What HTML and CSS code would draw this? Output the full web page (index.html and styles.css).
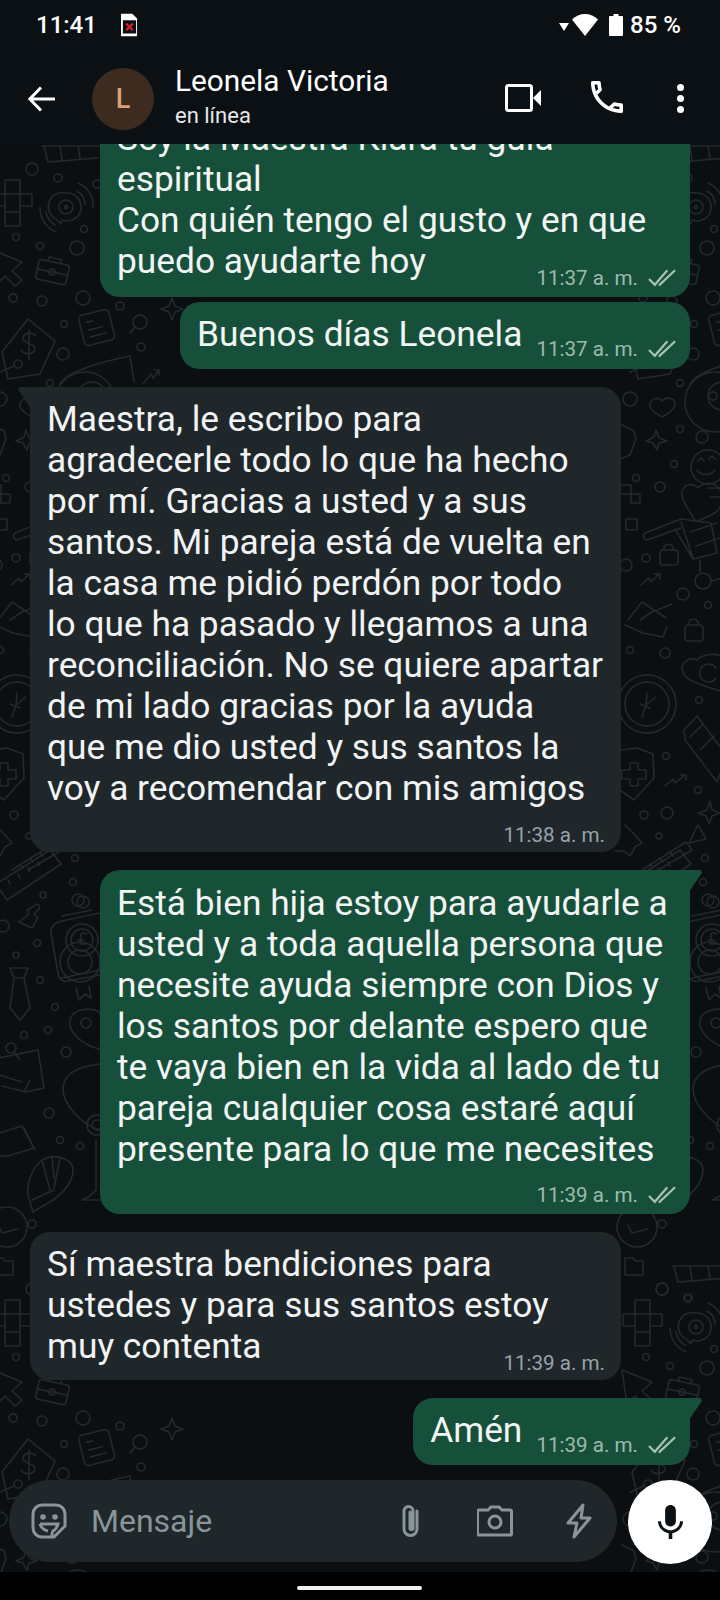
FILE: index.html
```html
<!DOCTYPE html>
<html lang="es">
<head>
    <meta charset="UTF-8">
    <meta name="viewport" content="width=device-width, initial-scale=1.0">
    <title>Leonela Victoria</title>
    <link rel="stylesheet" href="styles.css">
</head>
<body>
<div class="screen">
    <div class="statusbar">
        <span class="clock">11:41</span>
        <svg class="sim" viewBox="0 0 18 24"><path d="M1 0h11l5 5v18a1 1 0 0 1-1 1H1a1 1 0 0 1-1-1V1a1 1 0 0 1 1-1z" fill="#fff"/><rect x="2" y="7" width="14" height="14" fill="#0b1014"/><path d="M5.500 10.500l7 7M12.500 10.500l-7 7" stroke="#d3202b" stroke-width="2.400"/></svg>
        <span class="status-right">
            <svg class="signal" viewBox="0 0 10 8"><path d="M0 0h10L5 8z" fill="#fff"/></svg>
            <svg class="wifi" viewBox="0 0 26 22"><path d="M13 0c5 0 9.500 2 13 5.500L13 22 0 5.500C3.500 2 8 0 13 0z" fill="#fff"/></svg>
            <svg class="battery" viewBox="0 0 14 22"><path d="M4.500 0h5v2H13a1 1 0 0 1 1 1v18a1 1 0 0 1-1 1H1a1 1 0 0 1-1-1V3a1 1 0 0 1 1-1h3.500z" fill="#fff"/></svg>
            <span class="percent">85 %</span>
        </span>
    </div>

    <div class="topbar">
        <svg class="back" viewBox="0 0 28 26"><path d="M27 13H2M13 1.500L1.800 13 13 24.500" fill="none" stroke="#fff" stroke-width="3"/></svg>
        <div class="avatar">L</div>
        <div class="contact">
            <div class="contact-name">Leonela Victoria</div>
            <div class="contact-state">en línea</div>
        </div>
        <svg class="video" viewBox="0 0 36 28"><rect x="1.500" y="1.500" width="25" height="25" rx="2" fill="none" stroke="#fff" stroke-width="3"/><path d="M28 14l8-8v16z" fill="#fff"/></svg>
        <svg class="phone" viewBox="3 3 18 18"><path d="M6.540 5c.06.89.21 1.760.45 2.590l-1.200 1.200c-.41-1.200-.67-2.470-.76-3.790h1.510m9.860 12.020c.85.24 1.720.39 2.600.45v1.490c-1.320-.09-2.590-.35-3.800-.75l1.200-1.190M7.500 3H4c-.55 0-1 .45-1 1 0 9.390 7.610 17 17 17 .55 0 1-.45 1-1v-3.490c0-.55-.45-1-1-1-1.240 0-2.450-.2-3.570-.57-.1-.04-.21-.05-.31-.05-.26 0-.51.1-.71.29l-2.200 2.200c-2.830-1.450-5.150-3.760-6.590-6.590l2.200-2.200c.28-.28.36-.67.25-1.020C8.700 6.450 8.500 5.250 8.500 4c0-.55-.45-1-1-1z" fill="#fff"/></svg>
        <div class="dots"><i></i><i></i><i></i></div>
    </div>

    <div class="chat">
        <!-- wallpaper doodles, drawn in page coordinates; the tile repeats every 630 x 1120 -->
        <svg class="wallpaper" width="720" height="1428" viewBox="0 144 720 1428">
            <defs>
                <g id="tile" fill="none" stroke="#23292d" stroke-width="1.600" stroke-linejoin="round" stroke-linecap="round">
                    <!-- top left -->
                    <path d="M44 146l4 16 50-4M42 146h60M60 146l2 14M78 146l2 12"/>
                    <circle cx="32" cy="169" r="6"/><circle cx="58" cy="178" r="4"/><circle cx="97" cy="184" r="4"/>
                    <path d="M5 180h15v46H5zM20 194h12v12H20zM5 194h15M5 212h15M-7 194h12v12H-7z"/>
                    <path d="M66 193a14 14 0 1 1-4 27l-1 4-5-5a14 14 0 0 1 10-26z"/><circle cx="66" cy="207" r="7"/><circle cx="66" cy="207" r="1.500"/>
                    <path d="M40 208a26 26 0 0 0 16 24M46 212a20 20 0 0 0 9 13M78 183a24 24 0 0 1 15 24M77 191a16 16 0 0 1 8 13"/>
                    <circle cx="16" cy="237" r="3.500"/><circle cx="40" cy="246" r="3.500"/><circle cx="77" cy="248" r="7"/><circle cx="84" cy="229" r="3.500"/>
                    <path d="M-8 250l30 12-10 9 10 9-7 6-10-10-8 8z"/>
                    <g transform="rotate(12 52 272)"><rect x="37" y="262" width="31" height="20" rx="3"/><path d="M37 272h31M46 262v-4h13v4"/><circle cx="52" cy="272" r="3"/></g>
                    <circle cx="13" cy="298" r="4"/><circle cx="42" cy="301" r="5"/><circle cx="83" cy="298" r="7"/><circle cx="64" cy="324" r="3.500"/><circle cx="63" cy="354" r="6"/>
                    <circle cx="120" cy="306" r="4"/><circle cx="141" cy="347" r="4"/>
                    <g transform="rotate(-14 97 327)"><rect x="81" y="312" width="31" height="31" rx="4"/><path d="M88 320h6M88 328h14M88 335h17"/></g>
                    <circle cx="140" cy="322" r="7"/><path d="M135 327l-5 6"/>
                    <path d="M172 298l3 8 8 3-8 3-3 8-3-8-8-3 8-3z"/>
                    <path d="M28 319l27 22-15 33-32 5-6-27z"/>
                    <path d="M36 336c-3-4-12-4-13 2s13 5 12 11-11 6-14 1M29 330v30"/><circle cx="18" cy="364" r="4"/><path d="M14 366L0 372"/>
                    <path d="M60 384c6-12 40-22 70-28l4 26"/><circle cx="92" cy="396" r="14"/>
                    <path d="M143 384l8-10 2 4 6-8M154 370h5v5"/>
                    <!-- right strip -->
                    <circle cx="630" cy="399" r="7"/><circle cx="680" cy="383" r="3.500"/><circle cx="680" cy="429" r="3.500"/><circle cx="702" cy="437" r="6"/><circle cx="674" cy="464" r="3.500"/><circle cx="636" cy="478" r="3.500"/><circle cx="660" cy="487" r="5"/>
                    <path d="M662 417c-6-3-13-8-12-13s8-8 12-3c4-5 12-3 13 2s-7 11-13 14z"/>
                    <path d="M656 430l3 8 8 3-8 2-2 7-4-7-7-2 8-4z"/>
                    <circle cx="715" cy="402" r="30"/><circle cx="713" cy="396" r="4"/>
                    <path d="M622 425l12 6 2 8-6 16-10 4"/>
                    <circle cx="708" cy="467" r="17"/><path d="M697 470c4 6 14 6 18 0M698 461l3-3 3 3M709 459l3-3 3 3"/>
                    <path d="M684 502c-8-16 8-22 14-14 6-8 24-6 24 10s-14 18-26 24zM707 488h13M710 497h10"/>
                    <path d="M622 485h9v9h9v9h-9v-9h-9M626 519h11v11h-11z"/>
                    <path d="M645 533l36-14 30 4 6 30-24 6-18-30M681 522l12 36M690 532l27-9M696 546l24-8"/><path d="M645 533a4 4 0 0 0 2 7l34-12"/>
                    <path d="M700 560v12"/><circle cx="703" cy="581" r="8"/><path d="M711 581l12-3"/>
                    <rect x="660" y="550" width="18" height="15" rx="3"/><path d="M664 550v-3a5 5 0 0 1 9 0v3"/>
                    <circle cx="646" cy="558" r="4"/><circle cx="626" cy="565" r="6"/>
                    <path d="M641 585l8-7 2 4 8-8M654 574h6v5"/>
                    <circle cx="683" cy="594" r="6"/><circle cx="708" cy="605" r="3.500"/>
                    <path d="M628 620l14-18 24 16M640 620l12-8 20-8"/>
                    <rect x="685" y="625" width="18" height="16" rx="3"/><path d="M689 625v-3a5 5 0 0 1 9 0v3"/>
                    <path d="M625 625l18 8 20 4 4-10"/>
                    <circle cx="630" cy="650" r="3.500"/><circle cx="665" cy="653" r="5"/>
                    <path d="M683 672c-4-8 6-16 14-12 6-6 20-8 26-2M683 672c2 10 24 14 40 20"/><path d="M716 668a9 9 0 1 0 0 10"/>
                    <circle cx="699" cy="700" r="3.500"/>
                    <circle cx="647" cy="704" r="29"/><circle cx="647" cy="704" r="22"/><path d="M656 697l-10 8-4 12M640 704l10 4M647 693l-1 12"/>
                    <path d="M684 730l13-14 30 40-10 26-32-42zM690 737l12-12M700 750l14-14"/>
                    <path d="M621 750l16-2 16 6 1 24-20 22-14-10"/>
                    <path d="M630 763h8v7h8v9h-8v7h-8v-7h-8v-9h8z"/>
                    <circle cx="666" cy="756" r="3.500"/><path d="M665 786l8-7 2 4 10-8M680 775h6v5"/><circle cx="698" cy="790" r="3.500"/>
                    <circle cx="644" cy="815" r="4"/><circle cx="667" cy="813" r="6"/><path d="M710 801l2 9 8 3-8 3-3 8-3-8-8-3 9-3z"/>
                    <path d="M698 825l8 14-17 4z"/><circle cx="659" cy="836" r="3"/>
                    <path d="M625 825l8 8 9 10-7 4-5 9-6-5-10 0"/>
                    <path d="M642 870l44-28 6 8-34 20M650 864l3 4M660 858l3 4M670 852l3 4"/>
                    <circle cx="705" cy="858" r="3.500"/><circle cx="708" cy="900" r="6"/><path d="M692 916l30-6"/>
                    <circle cx="710" cy="962" r="20"/><circle cx="710" cy="962" r="12"/>
                    <!-- left lower -->
                    <path d="M-4 884l54-34 11 14-54 36zM8 880l2 4M18 874l2 4M28 868l2 4M38 862l2 4"/>
                    <circle cx="73" cy="882" r="3.500"/><circle cx="83" cy="902" r="6"/><circle cx="43" cy="895" r="3"/><circle cx="3" cy="926" r="6"/>
                    <path d="M34 906a3 3 0 1 1 4 4l-4 4 4 4-6 10-13-6 10-8-2-4z"/>
                    <circle cx="37" cy="943" r="3.500"/><circle cx="16" cy="955" r="3"/>
                    <path d="M100 913l-38 8q-12 3-11 12l7 40q2 10 10 8l32-6M62 978l38-8M76 988l3 12 6-6 6 4-2-12"/>
                    <circle cx="82" cy="940" r="16"/><circle cx="82" cy="940" r="11"/><path d="M86 934c-4-3-6 0-5 4l-1 6h7M78 940h6"/>
                    <path d="M10 968h18l-4 10 6 30-10 12-10-12 4-30z"/><path d="M14 978h10"/>
                    <circle cx="40" cy="980" r="3.500"/><circle cx="55" cy="1007" r="3.500"/>
                    <path d="M70 1020c2-10 18-14 30-8l8 40-18-6c-12-6-22-16-20-26z"/><circle cx="86" cy="1023" r="5"/>
                    <circle cx="48" cy="1030" r="3.500"/><circle cx="24" cy="1035" r="3.500"/><circle cx="66" cy="1052" r="5"/>
                    <path d="M-2 1058l40-8 6 38-18 4-24-6M-4 1074l26 8M24 1092l6-12"/><circle cx="11" cy="1048" r="5"/><path d="M14 1052l6 8"/>
                    <path d="M100 1064c-18 2-36 8-37 24s20 38 37 42"/>
                    <circle cx="97" cy="1125" r="10"/><circle cx="97" cy="1125" r="5"/>
                    <circle cx="49" cy="1113" r="5"/><circle cx="60" cy="1140" r="3.500"/><circle cx="80" cy="1146" r="3.500"/>
                    <path d="M-4 1134l26-8 12 22-26 8-12 0M24 1128l11 22"/>
                    <path d="M42 1160c-12 10-18 30-12 42l3 10 20-12c12-8 20-20 20-30s-16-18-31-10zM42 1160l8 30M52 1156l2 22M60 1158l-6 30M32 1200l22-10"/>
                    <path d="M96 1140v50l-6 6-8 4h18"/>
                    <!-- lower right -->
                    <circle cx="637" cy="1227" r="20"/><path d="M628 1225l4 8 16-4"/><circle cx="662" cy="1224" r="4"/>
                    <path d="M625 1258h8l2 3h8v14h-18z"/>
                    <circle cx="662" cy="1289" r="6"/><circle cx="688" cy="1298" r="3.500"/>
                    <!-- cart along the bottom -->
                    <path d="M104 1250l-2 30 6 12 78-12 54-6-6-24M134 1262v16M100 1292l-2 -12"/>
                    <path d="M102 1263a4 4 0 0 0 0 10"/><circle cx="134" cy="1287" r="13"/><circle cx="134" cy="1287" r="6"/><circle cx="210" cy="1275" r="13"/><circle cx="210" cy="1275" r="6"/>
                    <path d="M147 1285l50-10"/>
                    <circle cx="255" cy="1279" r="3.500"/><circle cx="120" cy="1308" r="3.500"/><circle cx="197" cy="1294" r="3.500"/><circle cx="196" cy="1319" r="3.500"/><circle cx="203" cy="1338" r="7"/>
                    <g transform="rotate(-12 245 1309)"><rect x="219" y="1292" width="53" height="33" rx="5"/><path d="M219 1309h53M236 1292v-4h18v4"/><circle cx="246" cy="1309" r="4"/></g>
                    <circle cx="278" cy="1283" r="3.500"/><circle cx="305" cy="1287" r="3.500"/><circle cx="290" cy="1301" r="5"/><circle cx="283" cy="1337" r="7"/><circle cx="247" cy="1352" r="7"/><path d="M247 1359v10"/>
                    <path d="M270 1262h85M322 1265h10v27h-10z"/><circle cx="346" cy="1286" r="5"/><circle cx="370" cy="1265" r="3.500"/><circle cx="374" cy="1290" r="3.500"/>
                    <circle cx="339" cy="1335" r="38"/><circle cx="339" cy="1335" r="30"/>
                    <path d="M322 1320h34l2 12-36 0zM328 1332v16h22v-16M332 1320v12M346 1320v12"/>
                    <path d="M172 1326l8 8-2 12 4 8-20 4 0-8 6-8 2-12z"/>
                    <path d="M395 1290h30M388 1298q-5 4 0 8h30M392 1306h30M392 1318h30M392 1330h30M386 1342q-4 4 0 8h30M392 1350h30M392 1362h30"/>
                    <path d="M388 1378l4-16 10 8 8-12 6 18"/>
                </g>
            </defs>
            <use href="#tile"/>
            <use href="#tile" x="630"/>
            <use href="#tile" x="-630"/>
            <use href="#tile" y="1120"/>
            <use href="#tile" x="630" y="1120"/>
            <use href="#tile" x="-630" y="1120"/>
        </svg>

        <div class="messages">
            <div class="msg out">
                <div class="msg-text">Soy la Maestra Kiara tu guía<br>espiritual<br>Con quién tengo el gusto y en que<br>puedo ayudarte hoy</div>
                <div class="meta overlap">11:37 a. m.<svg class="checks" viewBox="0 0 30 18"><path d="M1 10l6 6L20 1M11 16l1 0L28 1" fill="none" stroke="#a6c2b4" stroke-width="2.300"/></svg></div>
            </div>
            <div class="msg out single">
                <div class="msg-text">Buenos días Leonela</div>
                <div class="meta">11:37 a. m.<svg class="checks" viewBox="0 0 30 18"><path d="M1 10l6 6L20 1M11 16l1 0L28 1" fill="none" stroke="#a6c2b4" stroke-width="2.300"/></svg></div>
            </div>
            <div class="msg in tail gap-top">
                <div class="msg-text">Maestra, le escribo para<br>agradecerle todo lo que ha hecho<br>por mí. Gracias a usted y a sus<br>santos. Mi pareja está de vuelta en<br>la casa me pidió perdón por todo<br>lo que ha pasado y llegamos a una<br>reconciliación. No se quiere apartar<br>de mi lado gracias por la ayuda<br>que me dio usted y sus santos la<br>voy a recomendar con mis amigos</div>
                <div class="meta">11:38 a. m.</div>
            </div>
            <div class="msg out tail gap-top">
                <div class="msg-text">Está bien hija estoy para ayudarle a<br>usted y a toda aquella persona que<br>necesite ayuda siempre con Dios y<br>los santos por delante espero que<br>te vaya bien en la vida al lado de tu<br>pareja cualquier cosa estaré aquí<br>presente para lo que me necesites</div>
                <div class="meta">11:39 a. m.<svg class="checks" viewBox="0 0 30 18"><path d="M1 10l6 6L20 1M11 16l1 0L28 1" fill="none" stroke="#a6c2b4" stroke-width="2.300"/></svg></div>
            </div>
            <div class="msg in gap-top">
                <div class="msg-text">Sí maestra bendiciones para<br>ustedes y para sus santos estoy<br>muy contenta</div>
                <div class="meta overlap">11:39 a. m.</div>
            </div>
            <div class="msg out tail single gap-top">
                <div class="msg-text">Amén</div>
                <div class="meta">11:39 a. m.<svg class="checks" viewBox="0 0 30 18"><path d="M1 10l6 6L20 1M11 16l1 0L28 1" fill="none" stroke="#a6c2b4" stroke-width="2.300"/></svg></div>
            </div>
        </div>

        <div class="composer">
            <div class="input-box">
                <svg class="ico-sticker" viewBox="0 0 36 36"><path d="M11 2h14a9 9 0 0 1 9 9v12L23 34H11a9 9 0 0 1-9-9V11a9 9 0 0 1 9-9z" fill="none" stroke="#8a9599" stroke-width="3"/><circle cx="12" cy="14" r="2.800" fill="#8a9599"/><circle cx="24" cy="14" r="2.800" fill="#8a9599"/><path d="M9 21h18c-1 4-3 6-5 7-1 1-1 3-1 5M9 21c1 4 4 6 8 7" fill="none" stroke="#8a9599" stroke-width="3"/></svg>
                <span class="placeholder">Mensaje</span>
                <svg class="ico-clip" viewBox="0 0 24 36"><path d="M18 8v18a6.500 6.500 0 0 1-13 0V8a4.500 4.500 0 0 1 9 0v18a1.800 1.800 0 0 1-3 0V9" fill="none" stroke="#8a9599" stroke-width="3" stroke-linecap="round"/></svg>
                <svg class="ico-camera" viewBox="0 0 36 32"><path d="M11 5l3-3h8l3 3h8a1.500 1.500 0 0 1 1.500 1.500v22A1.500 1.500 0 0 1 34 30H2a1.500 1.500 0 0 1-1.500-1.500v-22A1.500 1.500 0 0 1 2 5z" fill="none" stroke="#8a9599" stroke-width="3"/><circle cx="18" cy="17" r="6" fill="none" stroke="#8a9599" stroke-width="3"/></svg>
                <svg class="ico-bolt" viewBox="0 0 26 36"><path d="M17 2L2 20h9l-3 14 16-19h-9z" fill="none" stroke="#8a9599" stroke-width="3" stroke-linejoin="round"/></svg>
            </div>
            <div class="mic-btn">
                <svg viewBox="5 2 14 19.500"><path d="M12 14c1.660 0 3-1.340 3-3V5c0-1.660-1.340-3-3-3S9 3.340 9 5v6c0 1.660 1.340 3 3 3zm5.300-3c0 3-2.540 5.100-5.300 5.100S6.700 14 6.700 11H5c0 3.410 2.720 6.230 6 6.720V21h2v-3.280c3.280-.49 6-3.310 6-6.720h-1.700z" fill="#0b1014"/></svg>
            </div>
        </div>
    </div>

    <div class="navbar"><div class="home-pill"></div></div>
</div>
</body>
</html>
```

FILE: styles.css
```css
* {
    box-sizing: border-box;
}
body {
    margin: 0;
    background-color: #000;
    font-family: Roboto, "Noto Sans", sans-serif;
    color: #fff;
}
.screen {
    width: 720px;
    height: 1600px;
    display: flex;
    flex-direction: column;
    overflow: hidden;
}

/* status bar */
.statusbar {
    height: 50px;
    flex: none;
    display: flex;
    align-items: center;
    padding: 0 39px 0 36px;
    background-color: #0b1014;
    font-size: 24px;
    font-weight: 500;
}
.clock {
    width: 85px;
}
.sim {
    width: 17px;
    height: 24px;
}
.status-right {
    margin-left: auto;
    display: flex;
    align-items: center;
}
.signal {
    width: 10px;
    height: 8px;
    margin-top: 4px;
}
.wifi {
    width: 26px;
    height: 22px;
    margin-left: 3px;
}
.battery {
    width: 14px;
    height: 22px;
    margin-left: 11px;
}
.percent {
    margin-left: 7px;
}

/* header */
.topbar {
    height: 94px;
    flex: none;
    display: flex;
    align-items: center;
    padding: 0 0 0 28px;
    background-color: #0b1014;
}
.back {
    width: 28px;
    height: 26px;
    margin-top: 3px;
}
.avatar {
    width: 62px;
    height: 62px;
    margin-left: 36px;
    border-radius: 50%;
    background-color: #3d2b20;
    color: #d9a07c;
    font-size: 27px;
    font-weight: 500;
    display: flex;
    align-items: center;
    justify-content: center;
    margin-top: 3px;
}
.contact {
    width: 330px;
    margin-left: 21px;
    margin-top: -2px;
}
.contact-name {
    font-size: 29.800px;
    line-height: 34px;
}
.contact-state {
    font-size: 22px;
    line-height: 26px;
    margin-top: 5px;
    color: #e4e8ea;
}
.video {
    width: 36px;
    height: 28px;
    margin-top: 2px;
}
.phone {
    width: 32px;
    height: 32px;
    margin-left: 50px;
}
.dots {
    margin-left: 54px;
    display: flex;
    flex-direction: column;
    gap: 4px;
    margin-top: 3px;
}
.dots i {
    display: block;
    width: 7px;
    height: 7px;
    border-radius: 50%;
    background-color: #fff;
}

/* chat */
.chat {
    flex: 1;
    min-height: 0;
    position: relative;
    display: flex;
    flex-direction: column;
    background-color: #0b0f12;
}
.wallpaper {
    position: absolute;
    top: 0;
    left: 0;
}
.messages {
    flex: 1;
    min-height: 0;
    position: relative;
    display: flex;
    flex-direction: column;
    justify-content: flex-end;
    gap: 5px;
    overflow: hidden;
    padding: 0 30px 15px;
}
.msg {
    position: relative;
    flex: none;
    border-radius: 20px;
    padding: 12px 17px 5px;
    font-size: 35.300px;
    line-height: 41px;
}
.msg.out {
    align-self: flex-end;
    padding-top: 13px;
    padding-bottom: 7px;
    background-color: #17503a;
    color: #f1f5f3;
}
.msg.in {
    align-self: flex-start;
    width: 591px;
    background-color: #1f272a;
    color: #f1f3f4;
}
.msg.out:not(.single) {
    width: 590px;
}
.gap-top {
    margin-top: 13px;
}
.msg.single {
    display: flex;
    align-items: flex-start;
    gap: 14px;
    padding-top: 12px;
    padding-bottom: 7px;
    height: 67px;
}
.msg.tail.out {
    border-top-right-radius: 0;
}
.msg.tail.in {
    border-top-left-radius: 0;
}
.msg.tail::after {
    content: "";
    position: absolute;
    top: 0;
    width: 13px;
    height: 22px;
}
.msg.tail.out::after {
    right: -12px;
    background-color: #17503a;
    clip-path: polygon(0 0, 90% 0, 100% 12%, 0 100%);
}
.msg.tail.in::after {
    left: -12px;
    background-color: #1f272a;
    clip-path: polygon(100% 0, 10% 0, 0 12%, 100% 100%);
}
.meta {
    display: flex;
    align-items: center;
    justify-content: flex-end;
    font-size: 20.600px;
    line-height: 24px;
    margin-top: 14px;
    margin-right: -1px;
    color: #97a3a8;
}
.msg.out .meta {
    gap: 10px;
    margin-top: 13px;
    margin-right: -4px;
    color: #9dbbac;
}
.msg .meta.overlap {
    margin-top: -16px;
}
.msg.single .meta {
    margin-top: 23px;
}
.checks {
    width: 29px;
    height: 18px;
}

/* message box */
.composer {
    position: relative;
    flex: none;
    display: flex;
    align-items: flex-start;
    gap: 11px;
    padding: 0 8px 8px 9px;
}
.input-box {
    width: 608px;
    height: 82px;
    display: flex;
    align-items: center;
    border-radius: 41px;
    background-color: #1f272a;
    padding: 0 25px 0 22px;
}
.ico-sticker {
    width: 36px;
    height: 36px;
    flex: none;
}
.placeholder {
    flex: 1;
    margin-left: 24px;
    font-size: 32px;
    color: #8a9599;
}
.ico-clip {
    width: 24px;
    height: 36px;
    flex: none;
}
.ico-camera {
    width: 36px;
    height: 32px;
    flex: none;
    margin-left: 54px;
}
.ico-bolt {
    width: 26px;
    height: 36px;
    flex: none;
    margin-left: 53px;
}
.mic-btn {
    width: 84px;
    height: 84px;
    flex: none;
    border-radius: 50%;
    background-color: #fff;
    display: flex;
    align-items: center;
    justify-content: center;
}
.mic-btn svg {
    width: 25px;
    height: 35px;
}

/* bottom navigation */
.navbar {
    height: 28px;
    flex: none;
    background-color: #000;
    display: flex;
    justify-content: center;
    padding-top: 14px;
}
.home-pill {
    width: 125px;
    height: 4px;
    margin-left: -1px;
    border-radius: 2px;
    background-color: #f1f1f1;
}
```
